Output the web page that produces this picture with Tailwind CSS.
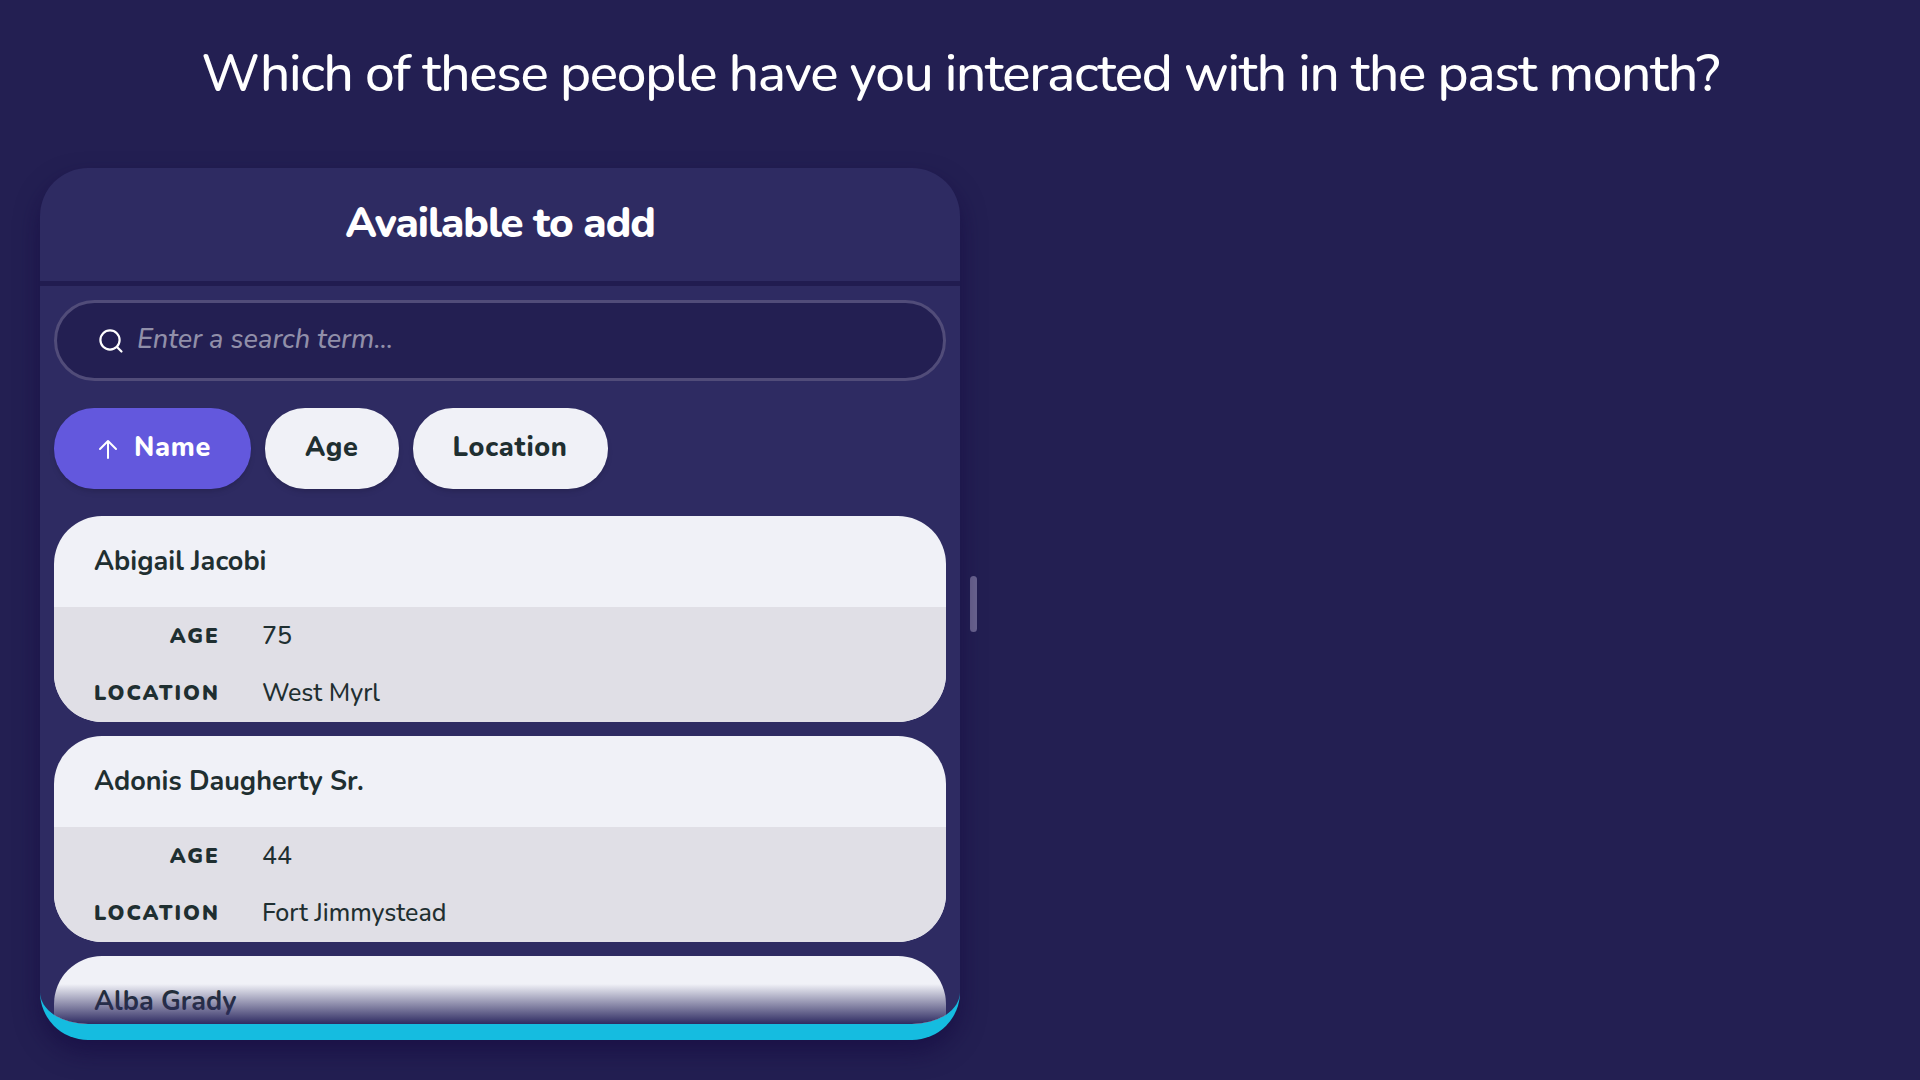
<!DOCTYPE html>
<html lang="en">
<head>
    <meta charset="UTF-8">
    <meta name="viewport" content="width=device-width, initial-scale=1.0">
    <title>Interview</title>
    <script src="https://cdn.jsdelivr.net/npm/@tailwindcss/browser@4"></script>
</head>
<body class="bg-[#231f52] text-white font-['Nunito','Lato',sans-serif] font-medium">
    <main class="flex flex-col h-screen px-10 pt-[34px] pb-10 overflow-hidden">
        <h1 class="text-[53px] leading-[80px] font-medium tracking-tight text-center mb-[54px]">Which of these people have you interacted with in the past month?</h1>

        <div class="flex flex-1 min-h-0 items-stretch">
            <!-- Available people -->
            <section class="relative flex flex-col w-1/2 min-w-0 rounded-[48px] border-b-16 border-[#15bce0] bg-[#2e2b62] overflow-hidden shadow-[0_12px_24px_rgba(20,8,64,0.6)]">
                <header class="border-b-5 border-[#211c50] pt-[27px] pb-7">
                    <h2 class="text-[42px] leading-[58px] font-extrabold tracking-tight text-center">Available to add</h2>
                </header>

                <label class="flex items-center gap-3 h-[81px] shrink-0 mx-[14px] mt-[14px] px-10 rounded-full border-3 border-[#514c79] bg-[#231f52]">
                    <svg class="w-7 h-7 shrink-0" viewBox="0 0 28 28" fill="none" stroke="currentColor" stroke-width="2.2" stroke-linecap="round">
                        <circle cx="13" cy="13" r="9.6" />
                        <path d="M20 20l4.5 4.5" />
                    </svg>
                    <input type="search" aria-label="Search" placeholder="Enter a search term..." class="w-full bg-transparent outline-none text-[27px] font-medium italic placeholder:text-[#918fa9]">
                </label>

                <!-- Sort buttons -->
                <div class="flex gap-[14px] mx-[14px] my-[27px] shrink-0 text-[27px] font-extrabold tracking-wide">
                    <button type="button" class="flex items-center gap-3 h-[81px] px-10 rounded-[40px] bg-[#6358dd] shadow-md">
                        <svg class="w-7 h-7" viewBox="0 0 28 28" fill="none" stroke="currentColor" stroke-width="2" stroke-linecap="round" stroke-linejoin="round">
                            <path d="M14 23V6M6 14l8-8 8 8" />
                        </svg>
                        Name
                    </button>
                    <button type="button" class="h-[81px] px-10 rounded-[40px] bg-[#f0f1f7] text-[#1f2f31] shadow-md">Age</button>
                    <button type="button" class="h-[81px] px-10 rounded-[40px] bg-[#f0f1f7] text-[#1f2f31] shadow-md">Location</button>
                </div>

                <ul class="flex-1 min-h-0 overflow-hidden px-[14px] space-y-[14px] text-[#1f2f31]">
                    <li class="rounded-[48px] bg-[#f0f1f7] overflow-hidden">
                        <h3 class="px-10 pt-[26px] pb-[25px] text-[27px] leading-[40px] font-bold">Abigail Jacobi</h3>
                        <dl class="grid grid-cols-[max-content_1fr] gap-x-[42px] px-10 pt-px bg-[#e0dfe6] text-[25px] leading-[57px]">
                            <dt class="text-right text-[21px] leading-[57px] font-black tracking-[2px] uppercase">Age</dt>
                            <dd>75</dd>
                            <dt class="text-right text-[21px] leading-[57px] font-black tracking-[2px] uppercase">Location</dt>
                            <dd>West Myrl</dd>
                        </dl>
                    </li>
                    <li class="rounded-[48px] bg-[#f0f1f7] overflow-hidden">
                        <h3 class="px-10 pt-[26px] pb-[25px] text-[27px] leading-[40px] font-bold">Adonis Daugherty Sr.</h3>
                        <dl class="grid grid-cols-[max-content_1fr] gap-x-[42px] px-10 pt-px bg-[#e0dfe6] text-[25px] leading-[57px]">
                            <dt class="text-right text-[21px] leading-[57px] font-black tracking-[2px] uppercase">Age</dt>
                            <dd>44</dd>
                            <dt class="text-right text-[21px] leading-[57px] font-black tracking-[2px] uppercase">Location</dt>
                            <dd>Fort Jimmystead</dd>
                        </dl>
                    </li>
                    <li class="rounded-t-[48px] bg-[#f0f1f7] overflow-hidden">
                        <h3 class="px-10 pt-[26px] pb-[25px] text-[27px] leading-[40px] font-bold">Alba Grady</h3>
                    </li>
                </ul>

                <!-- Fade at the end of the list -->
                <div class="absolute inset-x-0 bottom-0 h-10 bg-linear-to-t from-[#2e2b62] to-[#2e2b62]/0 pointer-events-none"></div>
            </section>

            <!-- Resize handle -->
            <div class="w-[7px] h-14 ml-[10px] self-center rounded-full bg-[#6b6590]"></div>
        </div>
    </main>
</body>
</html>
